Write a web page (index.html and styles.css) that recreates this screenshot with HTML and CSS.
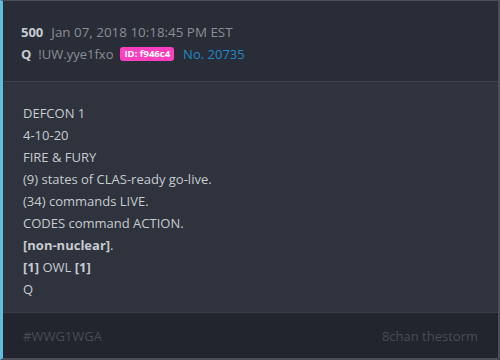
FILE: index.html
```html
<!DOCTYPE html>
<html lang="en">
<head>
<meta charset="UTF-8">
<meta name="viewport" content="width=device-width, initial-scale=1.0">
<title>Post 500</title>
<link rel="stylesheet" href="styles.css">
</head>
<body>

<div class="post">
  <div class="post-head">
    <p class="line"><span class="num">500</span><span class="date">Jan 07, 2018 10:18:45 PM EST</span></p>
    <p class="line"><span class="num">Q</span><span class="trip">!UW.yye1fxo</span><span class="uid">ID: f946c4</span><a class="no" href="#">No. 20735</a></p>
  </div>

  <div class="post-body">
    <p>DEFCON 1</p>
    <p>4-10-20</p>
    <p>FIRE &amp; FURY</p>
    <p>(9) states of CLAS-ready go-live.</p>
    <p>(34) commands LIVE.</p>
    <p>CODES command ACTION.</p>
    <p><b>[non-nuclear]</b>.</p>
    <p><b>[1]</b> OWL <b>[1]</b></p>
    <p>Q</p>
  </div>

  <div class="post-foot">
    <span>#WWG1WGA</span>
    <span>8chan thestorm</span>
  </div>
</div>

</body>
</html>
```

FILE: styles.css
```css
body {
    margin: 0;
    background-color: #2e333d;
    font-family: "Open Sans", "Noto Sans", sans-serif;
    font-size: 13px;
}
.post {
    width: 495px;
    height: 357px;
    display: flex;
    flex-direction: column;
    border-left: 3px solid #5bc0de;
    border-right: 2px solid #4a4e57;
    border-bottom: 2px solid #4a4e57;
    border-top: 1px solid #4a4e57;
    border-bottom-right-radius: 3px;
    background-color: #2e333d;
}
.post-head {
    background-color: #292d37;
    padding: 20px 20px 0 18px;
    height: 60px;
    border-bottom: 1px solid #3d424c;
}
.line {
    margin: 0;
    line-height: 22px;
    display: flex;
    align-items: center;
    gap: 7px;
    color: #8a8e96;
}
.num {
    font-weight: 700;
    color: #c8cbd0;
}
.date {
    margin-left: 1px;
    font-size: 13.4px;
}
.uid {
    background-color: #ff3fbf;
    color: #fff;
    font-weight: 700;
    font-size: 9.5px;
    line-height: 14px;
    padding: 0 4px;
    border-radius: 3px;
    margin-right: 2px;
}
.no {
    color: #1e88c8;
    text-decoration: none;
}
.post-body {
    flex: 1;
    padding: 20px 20px 0 20px;
    color: #c8cbd0;
}
.post-body p {
    margin: 0;
    line-height: 22px;
}
.post-foot {
    background-color: #22252d;
    border-top: 1px solid #383c45;
    height: 45px;
    padding: 0 20px;
    display: flex;
    justify-content: space-between;
    align-items: center;
    color: #474c57;
}
```
